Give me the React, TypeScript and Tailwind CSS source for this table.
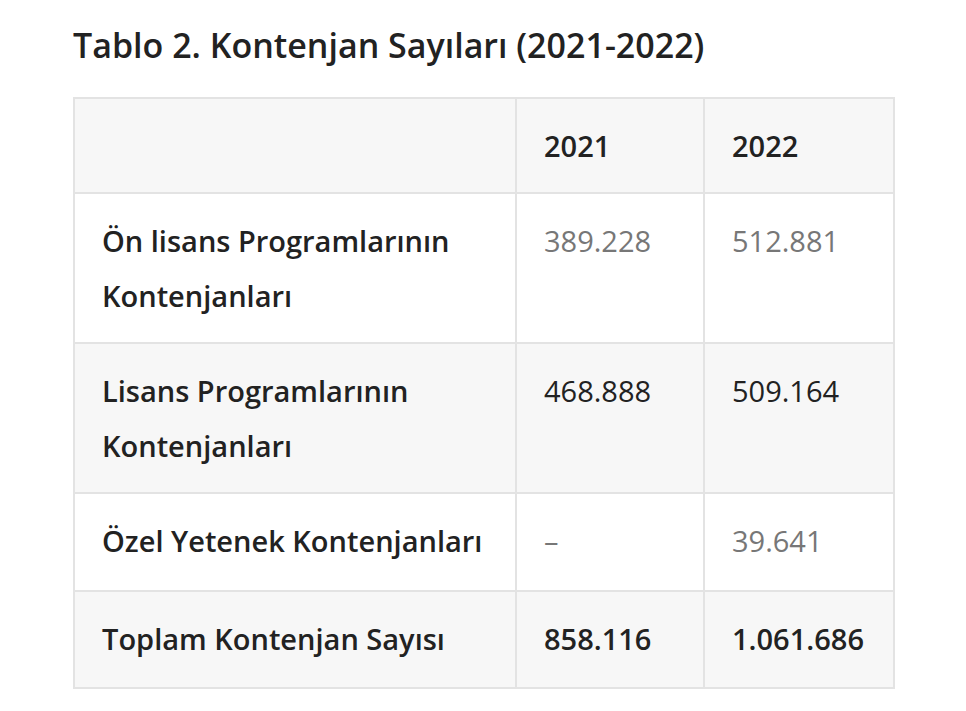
import { FC, ReactNode } from "react";

const rows = [
  { label: "Ön lisans Programlarının Kontenjanları", a: "389.228", b: "512.881", tone: "muted", bg: false, h: "" },
  { label: "Lisans Programlarının Kontenjanları", a: "468.888", b: "509.164", tone: "dark", bg: true, h: "" },
  { label: "Özel Yetenek Kontenjanları", a: "–", b: "39.641", tone: "muted", bg: false, h: "h-[98px]" },
  { label: "Toplam Kontenjan Sayısı", a: "858.116", b: "1.061.686", tone: "bold", bg: true, h: "h-[97px]" },
];

const Cell: FC<{ children?: ReactNode; className?: string }> = ({ children, className }) => (
  <td className={`border-2 border-[#e3e3e3] px-[27px] py-[19px] align-top ${className ?? ""}`}>{children}</td>
);

export default function App() {
  return (
    <div className="min-h-[711px] w-[966px] bg-white px-[73px] pt-[23px] font-['Open_Sans',sans-serif] text-[#222]">
      <h1 className="text-[34px] font-semibold leading-[44px]">
        Tablo 2. Kontenjan Sayıları (2021-2022)
      </h1>
      <table className="mt-[30px] w-[820px] table-fixed border-collapse text-[29px] leading-[55px]">
        <colgroup>
          <col className="w-[442px]" />
          <col className="w-[188px]" />
          <col className="w-[190px]" />
        </colgroup>
        <thead>
          <tr className="bg-[#f7f7f7] font-semibold">
            <Cell />
            <Cell>2021</Cell>
            <Cell>2022</Cell>
          </tr>
        </thead>
        <tbody>
          {rows.map((row, idx) => {
            const valueClass =
              row.tone === "muted"
                ? "text-[#777] font-normal"
                : row.tone === "bold"
                ? "font-semibold"
                : "font-normal";
            return (
              <tr key={idx} className={`${row.bg ? "bg-[#f7f7f7]" : "bg-white"} ${row.h}`}>
                <Cell className="font-semibold">{row.label}</Cell>
                <Cell className={valueClass}>{row.a}</Cell>
                <Cell className={valueClass}>{row.b}</Cell>
              </tr>
            );
          })}
        </tbody>
      </table>
    </div>
  );
}
